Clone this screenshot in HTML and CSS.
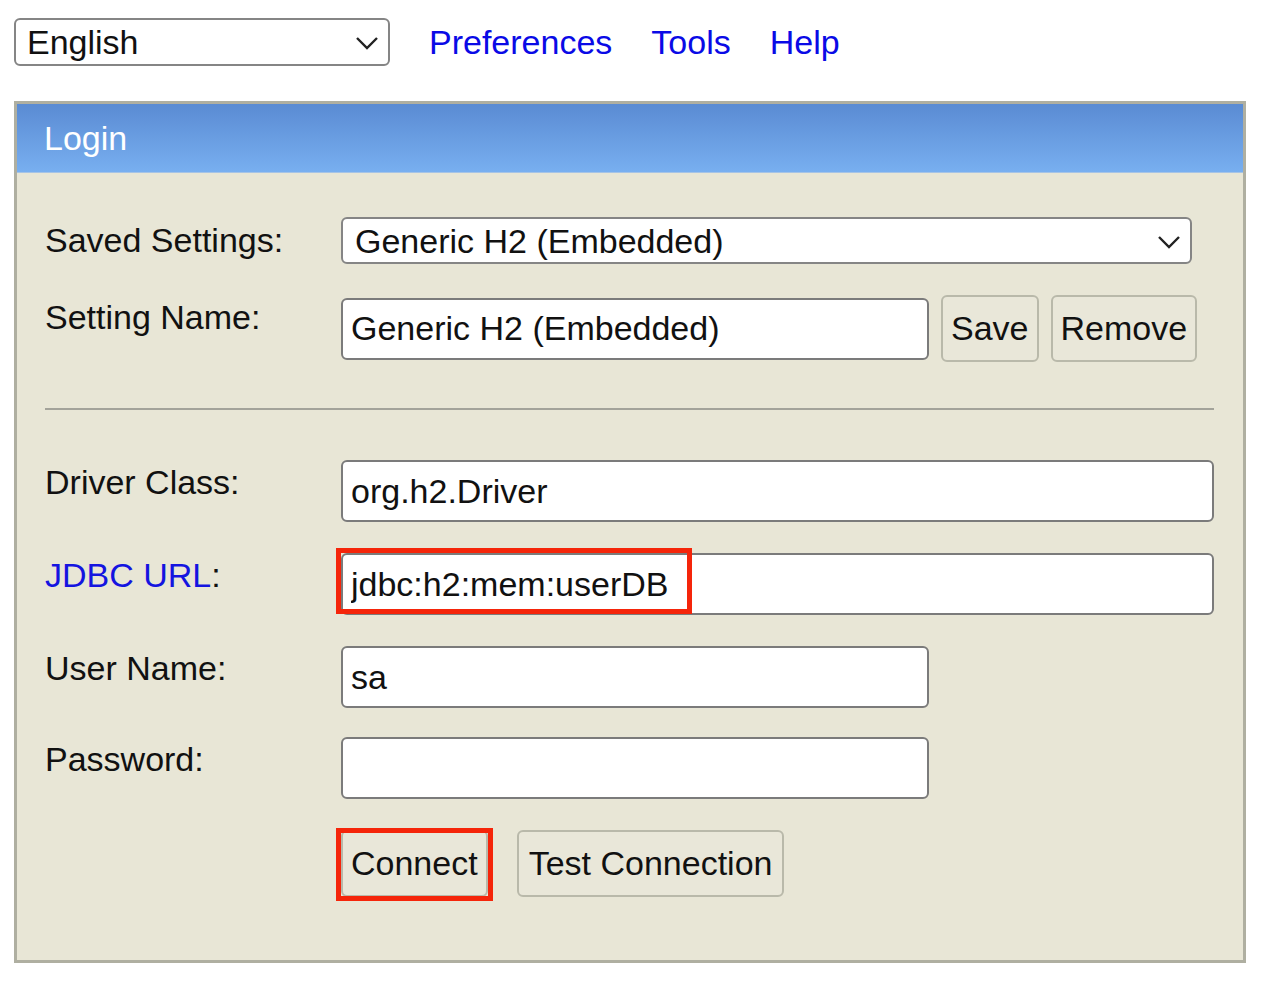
FILE: index.html
```html
<!DOCTYPE html>
<html lang="en">

<head>
  <meta charset="UTF-8">
  <title>H2 Console</title>
  <link rel="stylesheet" href="styles.css">
</head>

<body>
  <div class="topbar">
    <div class="select-wrap lang">
      <select class="select">
        <option>English</option>
      </select>
      <svg class="chevron" width="24" height="14" viewBox="0 0 24 14"><path d="M2 2l10 10 10-10" /></svg>
    </div>
    <a href="#" class="nav-link">Preferences</a>
    <a href="#" class="nav-link">Tools</a>
    <a href="#" class="nav-link">Help</a>
  </div>

  <div class="panel">
    <div class="panel-head">Login</div>
    <div class="panel-body">
      <div class="row row-saved">
        <label class="label">Saved Settings:</label>
        <div class="select-wrap saved">
          <select class="select">
            <option>Generic H2 (Embedded)</option>
          </select>
          <svg class="chevron" width="24" height="14" viewBox="0 0 24 14"><path d="M2 2l10 10 10-10" /></svg>
        </div>
      </div>

      <div class="row row-name">
        <label class="label">Setting Name:</label>
        <div class="field">
          <input class="input short" type="text" value="Generic H2 (Embedded)">
          <button class="btn">Save</button>
          <button class="btn">Remove</button>
        </div>
      </div>

      <hr class="divider">

      <div class="row">
        <label class="label">Driver Class:</label>
        <input class="input wide" type="text" value="org.h2.Driver">
      </div>

      <div class="row">
        <label class="label"><a href="#" class="label-link">JDBC URL</a>:</label>
        <div class="mark-wrap">
          <input class="input wide" type="text" value="jdbc:h2:mem:userDB">
          <span class="mark mark-url"></span>
        </div>
      </div>

      <div class="row row-user">
        <label class="label">User Name:</label>
        <input class="input short" type="text" value="sa">
      </div>

      <div class="row">
        <label class="label">Password:</label>
        <input class="input short" type="password" value="">
      </div>

      <div class="row row-actions">
        <span class="label"></span>
        <div class="field">
          <div class="mark-wrap">
            <button class="btn">Connect</button>
            <span class="mark mark-btn"></span>
          </div>
          <button class="btn test-btn">Test Connection</button>
        </div>
      </div>
    </div>
  </div>
</body>

</html>
```

FILE: styles.css
```css
body {
  font-family: "Liberation Sans", Arial, sans-serif;
  font-size: 34px;
  color: #111;
  background: #fff;
  margin: 0;
  padding: 18px 14px;
}

.topbar {
  display: flex;
  align-items: center;
  gap: 39px;
  margin-bottom: 35px;
}

.nav-link {
  color: #0a0ae6;
  text-decoration: none;
}

.select-wrap {
  position: relative;
}

.select {
  appearance: none;
  -webkit-appearance: none;
  width: 100%;
  height: 100%;
  font-family: inherit;
  font-size: 34px;
  color: #111;
  background: #fff;
  border: 2px solid #858585;
  border-radius: 6px;
  padding: 0 11px;
  box-sizing: border-box;
}

.chevron {
  position: absolute;
  right: 11px;
  top: 50%;
  margin-top: -6px;
  fill: none;
  stroke: #222;
  stroke-width: 2.4;
}

.lang {
  width: 376px;
  height: 48px;
}

.saved {
  width: 851px;
  height: 47px;
}

.saved .select {
  padding-left: 12px;
}

.panel {
  width: 1232px;
  box-sizing: border-box;
  border: 3px solid #afafa1;
  background: #e8e6d6;
}

.panel-head {
  height: 69px;
  display: flex;
  align-items: center;
  padding-left: 27px;
  color: #fff;
  background: linear-gradient(#5a8bd3, #78aff0);
  border-bottom: 1px solid #a6c4e6;
  box-sizing: border-box;
}

.panel-body {
  padding: 44px 29px 63px 28px;
}

.row {
  display: flex;
  align-items: flex-start;
  margin-bottom: 31px;
}

.row-saved {
  align-items: center;
  margin-bottom: 31px;
}

.row-name {
  margin-bottom: 0;
}

.row-user {
  margin-bottom: 29px;
}

.row-actions {
  margin-bottom: 0;
}

.label {
  width: 296px;
  flex-shrink: 0;
  line-height: 39px;
  padding-top: 3px;
}

.row-saved .label {
  padding-top: 0;
}

.label-link {
  color: #1414e0;
  text-decoration: none;
}

.field {
  display: flex;
  align-items: center;
  gap: 12px;
}

.input {
  height: 62px;
  font-family: inherit;
  font-size: 34px;
  color: #111;
  background: #fff;
  border: 2px solid #7b7b7b;
  border-radius: 6px;
  padding: 0 8px;
  box-sizing: border-box;
}

.input.short {
  width: 588px;
}

.input.wide {
  width: 873px;
}

.btn {
  height: 67px;
  font-family: inherit;
  font-size: 34px;
  color: #111;
  background: #e9e7d9;
  border: 2px solid #b9b9aa;
  border-radius: 6px;
  padding: 0 8px;
}

.test-btn {
  margin-left: 17px;
  padding: 0 10px;
}

.divider {
  border: none;
  border-top: 2px solid #a3a39a;
  margin: 46px 0 50px;
}

.mark-wrap {
  position: relative;
  display: flex;
}

.mark {
  position: absolute;
  border: 5px solid #f5250a;
  pointer-events: none;
}

.mark-url {
  left: -5px;
  top: -5px;
  width: 346px;
  height: 56px;
}

.mark-btn {
  left: -5px;
  top: -2px;
  right: -5px;
  bottom: -4px;
}
```
